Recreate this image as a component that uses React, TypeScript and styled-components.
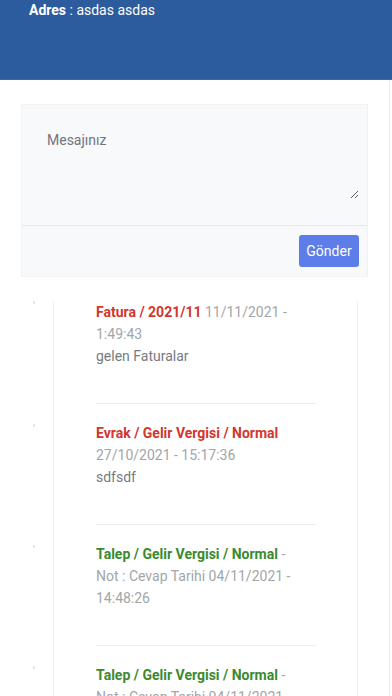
import React from "react";
import styled, { createGlobalStyle } from "styled-components";

const GlobalStyle = createGlobalStyle`
  html, body { margin: 0; padding: 0; background: #ffffff; }
  body { font-family: Roboto, "Liberation Sans", sans-serif; -webkit-font-smoothing: antialiased; }
  * { box-sizing: border-box; }
`;

const Header = styled.header`
  height: 80px;
  background: #2d5c9e;
  color: #ffffff;
  padding: 0 29px;
  font-size: 14px;
  line-height: 21px;
  border-bottom: 1px solid #3a68a8;
`;

const Label = styled.b`
  font-weight: 700;
`;

const Main = styled.main`
  width: 390px;
  min-height: 616px;
  border-right: 1px solid #ececec;
  padding-top: 24px;
`;

const FormCard = styled.form`
  margin: 0 21px 0 21px;
  background: #f8f9fb;
  border: 1px solid #f1f2f4;
`;

const CardBody = styled.div`
  padding: 8px 8px 26px 9px;
  border-bottom: 1px solid #e8eaed;
`;

const MessageInput = styled.textarea`
  display: block;
  width: 100%;
  height: 86px;
  padding: 17px 16px 14px;
  border: none;
  outline: none;
  background: transparent;
  resize: vertical;
  font-family: Roboto, "Liberation Sans", sans-serif;
  font-size: 14px;
  line-height: 20px;
  color: #495057;
  &::placeholder { color: #6f757b; }
`;

const CardFooter = styled.div`
  height: 50px;
  display: flex;
  align-items: center;
  justify-content: flex-end;
  padding-right: 8px;
`;

const SendButton = styled.button`
  width: 60px;
  height: 32px;
  border: none;
  border-radius: 3px;
  background: #5d7de9;
  color: #ffffff;
  font-family: Roboto, "Liberation Sans", sans-serif;
  font-size: 14px;
  padding: 0;
`;

const Timeline = styled.section`
  margin: 24px 0 0 53px;
  width: 305px;
  border-left: 1px solid #f0f0f0;
  border-right: 1px solid #f0f0f0;
  padding: 0 41px 0 42px;
`;

const Item = styled.article<{ $first?: boolean }>`
  position: relative;
  padding: ${(p) => (p.$first ? "0" : "18px")} 0 36px 0;
  border-bottom: 1px solid #ececec;
  font-size: 14px;
  line-height: 22px;
`;

const Marker = styled.span<{ $top: number }>`
  position: absolute;
  left: -63px;
  top: ${(p) => p.$top}px;
  width: 2px;
  height: 3px;
  background: #e6e6e6;
`;

const Meta = styled.p`
  margin: 0;
  max-width: 205px;
  color: #a2a6aa;
`;

const Title = styled.span<{ $tone: "red" | "green" }>`
  font-weight: 700;
  color: ${(p) => (p.$tone === "red" ? "#d2362d" : "#3b8a30")};
`;

const Body = styled.p`
  margin: 0;
  color: #767b81;
`;

type Entry = { title: string; tone: "red" | "green"; meta: string; body?: string };

const entries: Entry[] = [
  { title: "Fatura / 2021/11", tone: "red", meta: "11/11/2021 - 1:49:43", body: "gelen Faturalar" },
  { title: "Evrak / Gelir Vergisi / Normal", tone: "red", meta: "27/10/2021 - 15:17:36", body: "sdfsdf" },
  { title: "Talep / Gelir Vergisi / Normal", tone: "green", meta: "- Not : Cevap Tarihi 04/11/2021 - 14:48:26" },
  { title: "Talep / Gelir Vergisi / Normal", tone: "green", meta: "- Not : Cevap Tarihi 04/11/2021 - 14:48:26" },
];

export default function App() {
  return (
    <>
      <GlobalStyle />
      <Header>
        <Label>Adres</Label> : asdas asdas
      </Header>
      <Main>
        <FormCard onSubmit={(e) => e.preventDefault()}>
          <CardBody>
            <MessageInput placeholder="Mesajınız" />
          </CardBody>
          <CardFooter>
            <SendButton type="submit">Gönder</SendButton>
          </CardFooter>
        </FormCard>
        <Timeline>
          {entries.map((e, i) => (
            <Item key={i} $first={i === 0}>
              <Marker $top={i === 0 ? 0 : 20} />
              <Meta>
                <Title $tone={e.tone}>{e.title}</Title> {e.meta}
              </Meta>
              {e.body && <Body>{e.body}</Body>}
            </Item>
          ))}
        </Timeline>
      </Main>
    </>
  );
}
